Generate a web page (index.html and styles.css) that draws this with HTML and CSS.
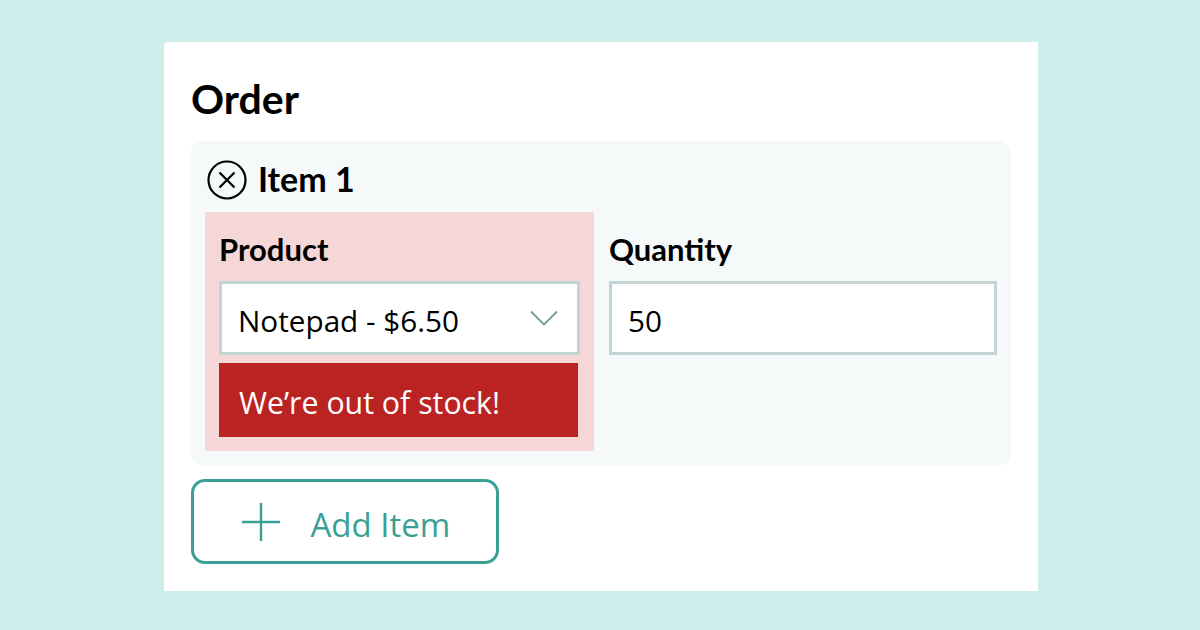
FILE: index.html
```html
<!DOCTYPE html>
<html lang="en">
<head>
  <meta charset="UTF-8" />
  <title>Order</title>
  <link rel="stylesheet" href="styles.css">
</head>
<body>
  <main class="card">
    <h1>Order</h1>
    <section class="item">
      <div class="item-head">
        <svg class="remove" width="40" height="40" viewBox="0 0 40 40" fill="none" stroke="#000">
          <circle cx="20" cy="20" r="18.5" stroke-width="2.2" />
          <path d="M12.5 12.5 L27.5 27.5 M27.5 12.5 L12.5 27.5" stroke-width="2.2" />
        </svg>
        <h2>Item 1</h2>
      </div>
      <div class="fields">
        <div class="field field-error">
          <label>Product</label>
          <div class="input select">
            <span>Notepad - $6.50</span>
            <svg width="28" height="16" viewBox="0 0 28 16" fill="none" stroke="#6f9c97" stroke-width="1.8">
              <path d="M1 1.5 L14 14.5 L27 1.5" />
            </svg>
          </div>
          <div class="alert">We’re out of stock!</div>
        </div>
        <div class="field">
          <label>Quantity</label>
          <div class="input">50</div>
        </div>
      </div>
    </section>
    <button class="add">
      <svg width="40" height="40" viewBox="0 0 40 40" fill="none" stroke="#3a9f95" stroke-width="2.4">
        <path d="M20 1 V39 M1 20 H39" />
      </svg>
      <span>Add Item</span>
    </button>
  </main>
</body>
</html>
```

FILE: styles.css
```css
body {
  margin: 0;
  height: 630px;
  overflow: hidden;
  background-color: #cfeeeb;
  color: #000;
  font-family: "Open Sans", sans-serif;
}

.card {
  box-sizing: border-box;
  width: 874px;
  height: 549px;
  margin: 42px 0 0 164px;
  padding: 32px 27px 0;
  background-color: white;
  border-radius: 4px 0 0 0;
}

h1 {
  margin: 0 0 17px;
  font-family: Lato, sans-serif;
  font-size: 41px;
  line-height: 50px;
  font-weight: 700;
}

.item {
  box-sizing: border-box;
  height: 324px;
  padding: 19px 14px 0;
  background-color: #f5f9fa;
  border-radius: 12px;
}

.item-head {
  display: flex;
  align-items: center;
  gap: 11px;
  padding-left: 2px;
  height: 40px;
  margin-bottom: 12px;
}

h2 {
  margin: 0 0 4px;
  font-family: Lato, sans-serif;
  font-size: 34px;
  font-weight: 700;
}

.fields {
  display: grid;
  grid-template-columns: 389px 403px;
}

.field {
  padding: 14px 0 14px 15px;
}

.field-error {
  box-sizing: border-box;
  height: 239px;
  padding: 14px 14px 14px 14px;
  background-color: #f5d7d8;
}

label {
  display: block;
  height: 55px;
  font-family: Lato, sans-serif;
  font-size: 31px;
  line-height: 46px;
  font-weight: 700;
}

.input {
  box-sizing: border-box;
  height: 74px;
  padding: 4px 17px 0 16px;
  display: flex;
  align-items: center;
  background-color: white;
  border: 3px solid #c2d4d3;
  font-size: 29.7px;
}

.select {
  justify-content: space-between;
  padding-right: 19px;
}

.select svg {
  margin-top: -4px;
}

.alert {
  box-sizing: border-box;
  width: 359px;
  height: 74px;
  margin-top: 8px;
  padding: 4px 0 0 20px;
  display: flex;
  align-items: center;
  background-color: #bb2323;
  color: white;
  font-size: 30.3px;
  font-weight: 500;
}

.add {
  box-sizing: border-box;
  width: 308px;
  height: 85px;
  margin-top: 14px;
  padding: 0 0 0 46.5px;
  display: flex;
  align-items: center;
  gap: 30px;
  background-color: white;
  border: 3.5px solid #3a9f95;
  border-radius: 14px;
  color: #3a9f95;
  font-family: "Open Sans", sans-serif;
  font-size: 33px;
}

.add span {
  padding-top: 6px;
}
```
